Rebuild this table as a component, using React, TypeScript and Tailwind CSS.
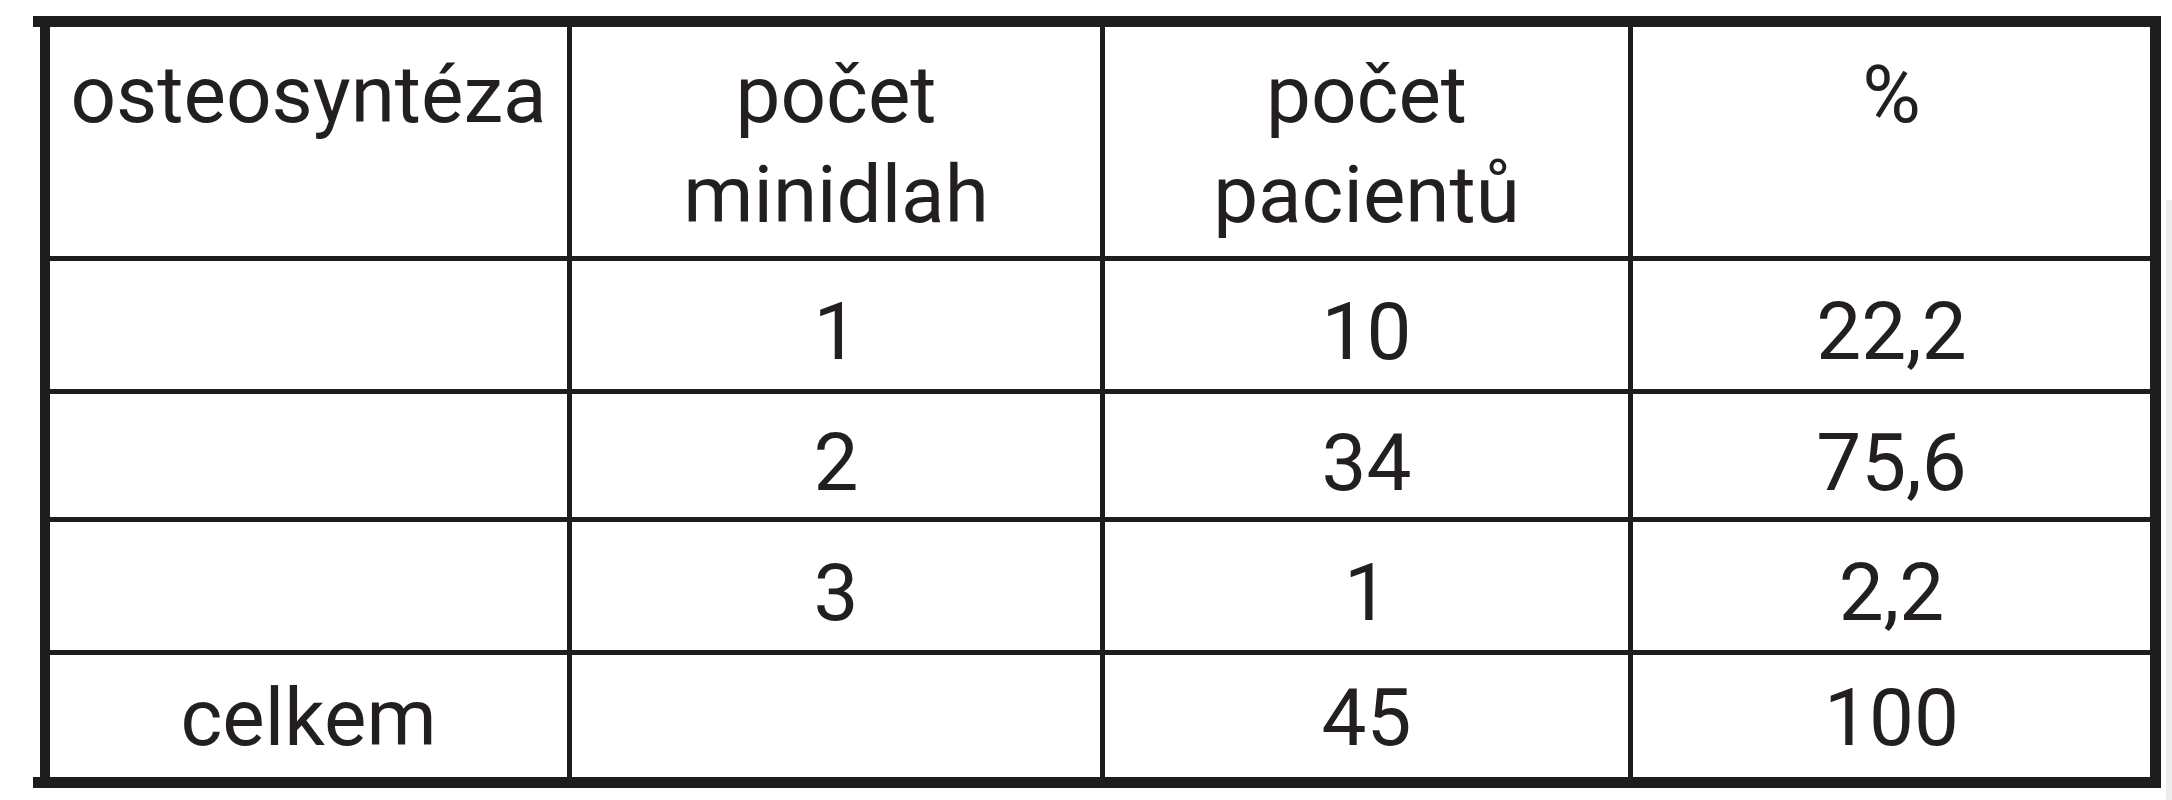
const rows = [
  { label: "", count: "1", patients: "10", pct: "22,2", pad: "pt-[14px]" },
  { label: "", count: "2", patients: "34", pct: "75,6", pad: "pt-[14px]" },
  { label: "", count: "3", patients: "1", pct: "2,2", pad: "pt-[14px]" },
  { label: "celkem", count: "", patients: "45", pct: "100", pad: "pt-[4px]" },
];

const Cell = ({ children, pad }: { children?: React.ReactNode; pad: string }) => (
  <div className={"bg-white flex items-center justify-center " + pad}>{children}</div>
);

const Head = ({ children }: { children: React.ReactNode }) => (
  <div className="bg-white text-center pt-[18px]">{children}</div>
);

export default function App() {
  return (
    <div className="min-h-[800px] w-[2172px] bg-white flex pt-[16px] font-['Roboto',sans-serif] text-[80px] leading-[100px] text-[#231f20]">
      <div className="ml-[33px] w-[2128px] h-[772px] border-y-[11px] border-[#1d1d1b]">
        <div className="ml-[7px] border-l-[10px] border-r-[11px] border-[#1d1d1b] bg-[#1d1d1b]">
          <div className="grid grid-cols-[517px_528px_523px_517px] grid-rows-[229px_128px_123px_128px_122px] gap-[5px]">
            <Head>osteosyntéza</Head>
            <Head>
              počet
              <br />
              minidlah
            </Head>
            <Head>
              počet
              <br />
              pacientů
            </Head>
            <Head>%</Head>
            {rows.map((r, i) => (
              <div key={i} className="contents">
                <Cell pad={r.pad}>{r.label}</Cell>
                <Cell pad={r.pad}>{r.count}</Cell>
                <Cell pad={r.pad}>{r.patients}</Cell>
                <Cell pad={r.pad}>{r.pct}</Cell>
              </div>
            ))}
          </div>
        </div>
      </div>
      <div className="ml-[5px] mt-[184px] w-[6px] h-[600px] bg-[#ececec]" />
    </div>
  );
}
